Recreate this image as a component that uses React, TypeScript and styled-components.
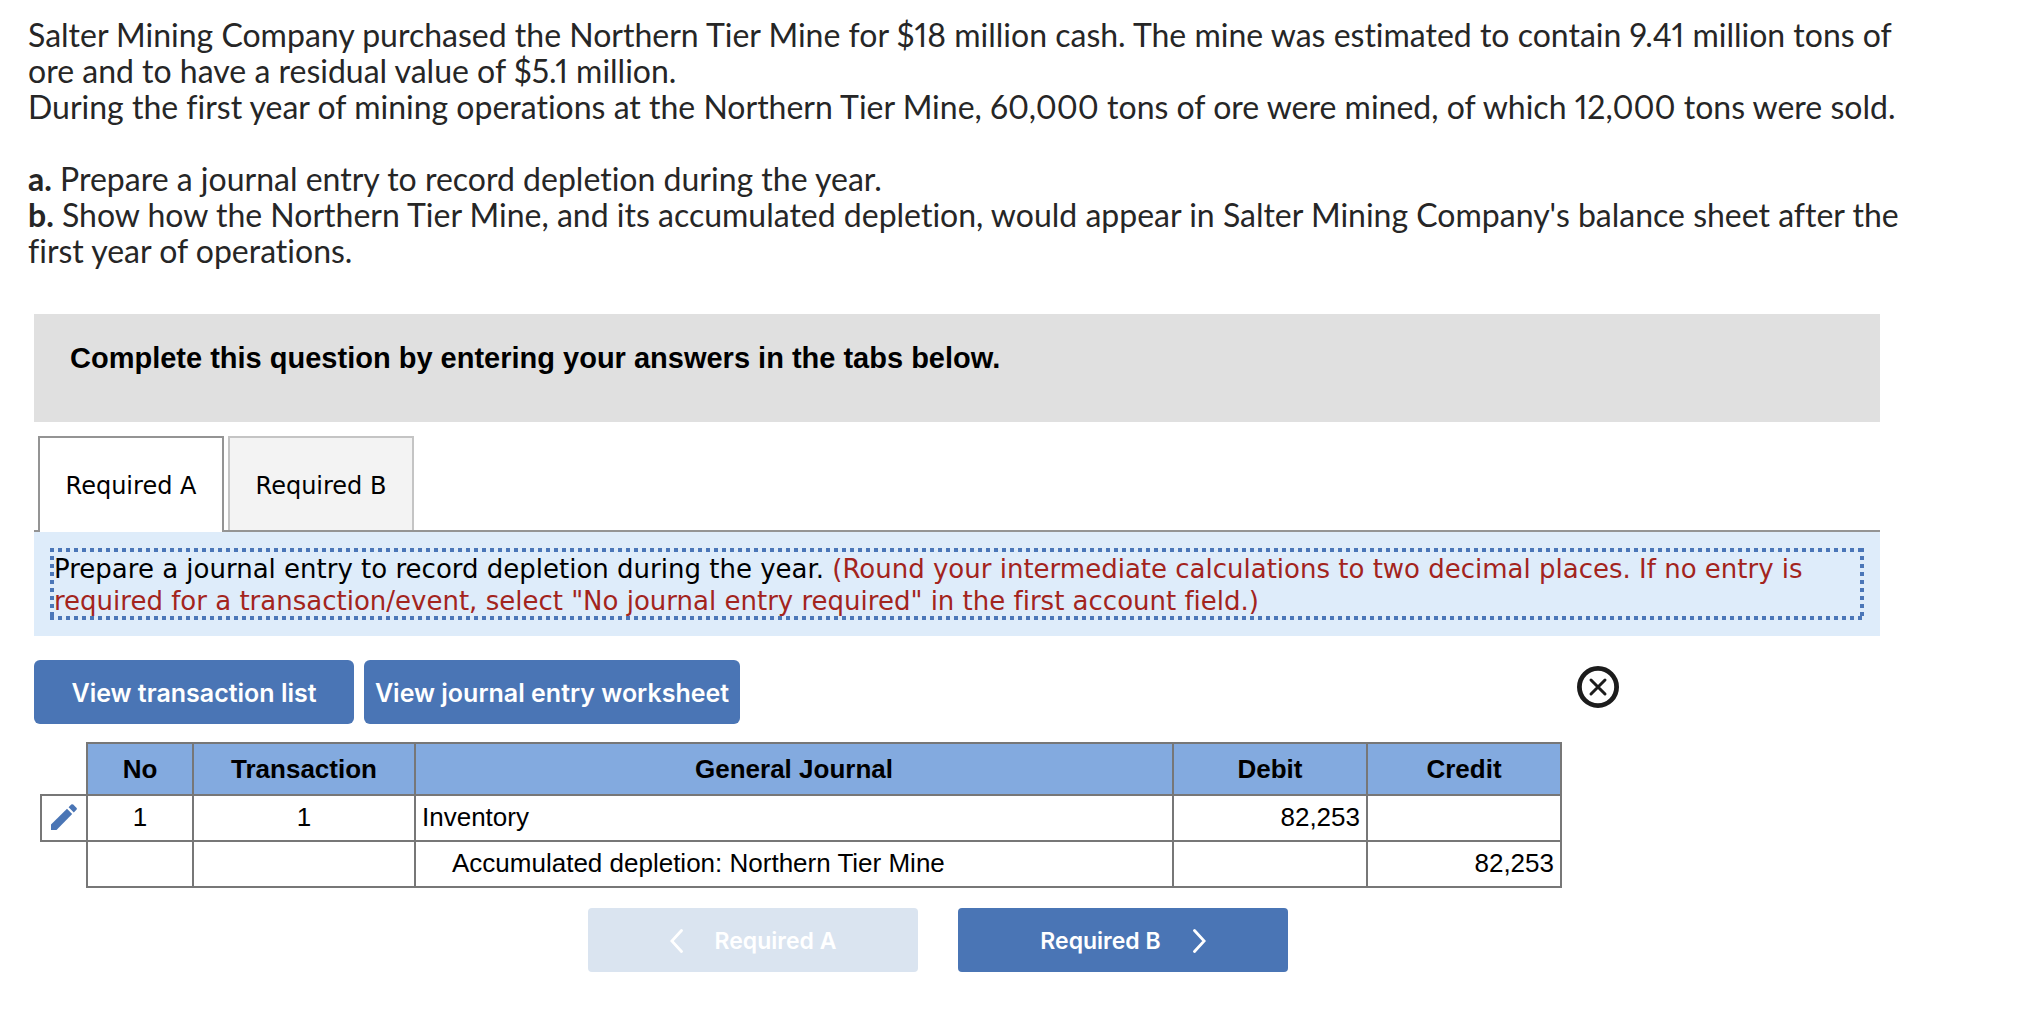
import React, { useState } from "react";
import styled, { createGlobalStyle } from "styled-components";

const GlobalStyle = createGlobalStyle`
  *, *::before, *::after { box-sizing: border-box; }
  body {
    margin: 0;
    background: #fff;
    color: #000;
    font-family: "Liberation Sans", Arial, sans-serif;
    font-variant-ligatures: none;
  }
  button { font: inherit; cursor: pointer; }
`;

const Page = styled.main`
  padding: 17px 0 32px;
`;

const Problem = styled.section`
  padding: 0 80px 0 28px;
  font-family: Lato, sans-serif;
  font-size: 32px;
  line-height: 36px;
  font-variant-numeric: proportional-nums;
  color: #262626;

  p { margin: 0; }
  p + ol { margin-top: 36px; }
`;

const Parts = styled.ol`
  margin: 0;
  padding: 0;
  list-style: none;
`;

const Worksheet = styled.section`
  margin: 45px 144px 0 34px;
`;

const Banner = styled.header`
  min-height: 108px;
  padding: 26px 36px;
  background: #e0e0e0;
`;

const BannerTitle = styled.h1`
  margin: 0;
  font-size: 29px;
  line-height: 36px;
  font-weight: bold;
`;

const TabList = styled.div`
  display: flex;
  gap: 4px;
  margin-top: 14px;
  padding-left: 4px;
  border-bottom: 2px solid #949494;
`;

const Tab = styled.button<{ $active: boolean }>`
  height: ${(p) => (p.$active ? 96 : 94)}px;
  width: 186px;
  margin-bottom: ${(p) => (p.$active ? -2 : 0)}px;
  padding: ${(p) => (p.$active ? 2 : 4)}px 0 0;
  border: 2px solid ${(p) => (p.$active ? "#949494" : "#c4c4c4")};
  border-bottom: 0;
  background: ${(p) => (p.$active ? "#fff" : "#f3f3f3")};
  color: #000;
  font-family: "DejaVu Sans", Verdana, sans-serif;
  font-size: 24px;
`;

const Panel = styled.div`
  padding: 16px;
  background: #deecfa;
`;

/* The frame is drawn as 4px squares on an 8px pitch, one strip for each side. */
const Instructions = styled.p`
  margin: 0;
  padding: 5px 4px 3px;
  background:
    linear-gradient(90deg, #4a76b8 50%, transparent 50%) 0 0 / 8px 4px repeat-x,
    linear-gradient(90deg, #4a76b8 50%, transparent 50%) 0 100% / 8px 4px repeat-x,
    linear-gradient(#4a76b8 50%, transparent 50%) 0 0 / 4px 8px repeat-y,
    linear-gradient(#4a76b8 50%, transparent 50%) 100% 0 / 4px 8px repeat-y;
  font-family: "DejaVu Sans", Verdana, sans-serif;
  font-size: 26px;
  line-height: 32px;
`;

const Note = styled.span`
  color: #a3241d;
`;

const Toolbar = styled.div`
  display: flex;
  align-items: flex-start;
  gap: 10px;
  margin-top: 24px;
  padding-right: 261px;
`;

const ActionButton = styled.button<{ $width: number }>`
  width: ${(p) => p.$width}px;
  height: 64px;
  padding: 2px 0 0;
  display: inline-flex;
  align-items: center;
  justify-content: center;
  gap: 32px;
  border: 0;
  border-radius: 6px;
  background: #4a75b5;
  color: #fff;
  font-family: Inter, sans-serif;
  font-size: 25px;
  font-weight: 600;
  white-space: nowrap;

  &:disabled {
    background: #dae4f0;
    cursor: default;
  }
`;

const NavButton = styled(ActionButton)`
  border-radius: 4px;
  font-size: 23px;
`;

const CloseButton = styled.button`
  display: block;
  margin: 6px 0 0 auto;
  padding: 0;
  border: 0;
  background: none;

  svg { display: block; }
`;

const TableWrap = styled.div`
  margin: 18px 318px 0 6px;
`;

const Journal = styled.table`
  width: 100%;
  table-layout: fixed;
  border-collapse: collapse;
  font-size: 26px;
  line-height: 30px;
`;

const Col = styled.col<{ $width?: number }>`
  width: ${(p) => (p.$width ? `${p.$width}px` : "auto")};
`;

const HeadCell = styled.th`
  height: 52px;
  padding: 0;
  border: 2px solid #777;
  background: #83aadf;
  font-weight: bold;
`;

const Blank = styled.td`
  padding: 0;
  border: 0;
`;

const Cell = styled.td<{ $align?: "left" | "center" | "right"; $indent?: boolean }>`
  height: 46px;
  padding: 0 6px 2px ${(p) => (p.$indent ? 36 : 6)}px;
  border: 2px solid #777;
  text-align: ${(p) => p.$align ?? "left"};
`;

const EditButton = styled.button`
  display: block;
  margin: 0 auto;
  padding: 0;
  border: 0;
  background: none;

  svg { display: block; }
`;

const Pager = styled.nav`
  display: flex;
  justify-content: center;
  gap: 40px;
  margin-top: 20px;
  padding-right: 38px;
`;

const CloseIcon = () => (
  <svg width="42" height="42" viewBox="0 0 42 42" fill="none" stroke="#1c1c1c" aria-hidden="true">
    <circle cx="21" cy="21" r="18.6" strokeWidth="4.8" />
    <path d="M14 14 28 28M28 14 14 28" strokeWidth="3" strokeLinecap="round" />
  </svg>
);

const PencilIcon = () => (
  <svg width="26" height="26" viewBox="0 0 26 26" fill="#4a75b5" aria-hidden="true">
    <path d="M0 20.5 16 4.8 21.2 10 5.5 26H0Z" />
    <path d="M17.6 3.2 20.2.6Q21.2-.3 22.2.6L25.4 3.8Q26.4 4.8 25.4 5.8L22.8 8.4Z" />
  </svg>
);

const Chevron = ({ direction }: { direction: "left" | "right" }) => (
  <svg width="13" height="24" viewBox="0 0 13 24" fill="none" stroke="#fff" strokeWidth="2.8" strokeLinecap="round" aria-hidden="true">
    <path d={direction === "left" ? "M11.5 1.5 1.8 12 11.5 22.5" : "M1.5 1.5 11.2 12 1.5 22.5"} />
  </svg>
);

type Row = {
  editable: boolean;
  no: string;
  transaction: string;
  account: string;
  indent: boolean;
  debit: string;
  credit: string;
};

const rows: Row[] = [
  { editable: true, no: "1", transaction: "1", account: "Inventory", indent: false, debit: "82,253", credit: "" },
  { editable: false, no: "", transaction: "", account: "Accumulated depletion: Northern Tier Mine", indent: true, debit: "", credit: "82,253" },
];

const tabs = ["Required A", "Required B"];

export default function App() {
  const [active, setActive] = useState(0);

  return (
    <>
      <GlobalStyle />
      <Page>
        <Problem>
          <p>
            Salter Mining Company purchased the Northern Tier Mine for $18 million cash. The mine was estimated to
            contain 9.41 million tons of ore and to have a residual value of $5.1 million.
          </p>
          <p>
            During the first year of mining operations at the Northern Tier Mine, 60,000 tons of ore were mined, of
            which 12,000 tons were sold.
          </p>
          <Parts>
            <li>
              <b>a.</b> Prepare a journal entry to record depletion during the year.
            </li>
            <li>
              <b>b.</b> Show how the Northern Tier Mine, and its accumulated depletion, would appear in Salter Mining
              Company's balance sheet after the first year of operations.
            </li>
          </Parts>
        </Problem>

        <Worksheet>
          <Banner>
            <BannerTitle>Complete this question by entering your answers in the tabs below.</BannerTitle>
          </Banner>

          <TabList role="tablist">
            {tabs.map((label, i) => (
              <Tab key={label} type="button" role="tab" aria-selected={i === active} $active={i === active} onClick={() => setActive(i)}>
                {label}
              </Tab>
            ))}
          </TabList>

          <Panel role="tabpanel">
            <Instructions>
              Prepare a journal entry to record depletion during the year.{" "}
              <Note>
                (Round your intermediate calculations to two decimal places. If no entry is required for a
                transaction/event, select "No journal entry required" in the first account field.)
              </Note>
            </Instructions>
          </Panel>

          <Toolbar>
            <ActionButton type="button" $width={320}>View transaction list</ActionButton>
            <ActionButton type="button" $width={376}>View journal entry worksheet</ActionButton>
            <CloseButton type="button" aria-label="Close">
              <CloseIcon />
            </CloseButton>
          </Toolbar>

          <TableWrap>
            <Journal>
              <colgroup>
                <Col $width={46} />
                <Col $width={106} />
                <Col $width={222} />
                <Col />
                <Col $width={194} />
                <Col $width={194} />
              </colgroup>
              <thead>
                <tr>
                  <Blank />
                  <HeadCell scope="col">No</HeadCell>
                  <HeadCell scope="col">Transaction</HeadCell>
                  <HeadCell scope="col">General Journal</HeadCell>
                  <HeadCell scope="col">Debit</HeadCell>
                  <HeadCell scope="col">Credit</HeadCell>
                </tr>
              </thead>
              <tbody>
                {rows.map((row) => (
                  <tr key={row.account}>
                    {row.editable ? (
                      <Cell>
                        <EditButton type="button" aria-label="Edit entry">
                          <PencilIcon />
                        </EditButton>
                      </Cell>
                    ) : (
                      <Blank />
                    )}
                    <Cell $align="center">{row.no}</Cell>
                    <Cell $align="center">{row.transaction}</Cell>
                    <Cell $indent={row.indent}>{row.account}</Cell>
                    <Cell $align="right">{row.debit}</Cell>
                    <Cell $align="right">{row.credit}</Cell>
                  </tr>
                ))}
              </tbody>
            </Journal>
          </TableWrap>

          <Pager aria-label="Required parts">
            <NavButton type="button" $width={330} disabled={active === 0} onClick={() => setActive(0)}>
              <Chevron direction="left" />
              Required A
            </NavButton>
            <NavButton type="button" $width={330} disabled={active === 1} onClick={() => setActive(1)}>
              Required B
              <Chevron direction="right" />
            </NavButton>
          </Pager>
        </Worksheet>
      </Page>
    </>
  );
}
